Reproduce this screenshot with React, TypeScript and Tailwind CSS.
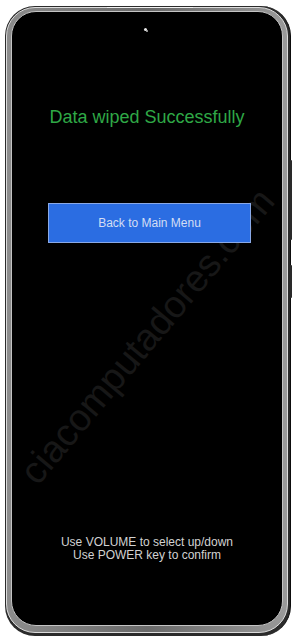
import React from "react";

export default function App() {
  const font = { fontFamily: '"Liberation Sans", Arial, sans-serif' };
  return (
    <div
      className="relative w-[297px] h-[642px] bg-white overflow-hidden pt-[6px] pl-[5px]"
      style={font}
    >
      {/* side buttons */}
      <div className="absolute left-[290px] top-[160px] w-[2px] h-[80px] bg-[#2a2a2a] rounded-r-[1px]" />
      <div className="absolute left-[290px] top-[265px] w-[2px] h-[33px] bg-[#2a2a2a] rounded-r-[1px]" />

      {/* phone body */}
      <div className="w-[286px] h-[630px] rounded-[30px] bg-[#2b2b2b] pt-[1px] pl-[1px] pr-[2px] pb-[3px] border-r border-[#0d0d0d]">
        <div className="relative h-full rounded-[29px] border border-[#dcdcdc] bg-gradient-to-r from-[#8c8c8c] via-[#6a6a6a] to-[#9a9a9a] pt-[3px] pl-[4px] pr-[4px] pb-[6px]">
          {/* top highlight */}
          <div className="absolute left-[100px] -top-[1px] w-[86px] h-[1px] bg-[#f2f2f2]" />
          {/* screen */}
          <div className="relative h-full rounded-[25px] border-[1.5px] border-[#c4c4c4] bg-black overflow-hidden flex flex-col">
            {/* camera */}
            <div className="absolute left-[132px] top-[16px] w-[3px] h-[3px] rounded-full bg-[#e8e8e8]" />
            <div className="absolute left-[134px] top-[18px] w-[2px] h-[2px] rounded-full bg-[#bdbdbd]" />

            {/* watermark */}
            <div className="absolute left-[135px] top-[324px] -translate-x-1/2 -translate-y-1/2 -rotate-[50deg] whitespace-nowrap text-[38px] leading-none text-[#171717]">
              ciacomputadores.com
            </div>

            <div className="relative mt-[96px] text-center text-[18px] leading-[18px] text-[#2fa846]">
              Data wiped Successfully
            </div>

            <div className="relative mt-[77px] ml-[36px] w-[203px] h-[40px] bg-[#2b6de2] border border-[#8aa9e6] flex items-center justify-center text-[12px] text-[#d3def4]">
              Back to Main Menu
            </div>

            <div className="relative mt-[293px] text-center text-[12px] leading-[12.5px] text-[#d2d2d2]">
              <div>Use VOLUME to select up/down</div>
              <div>Use POWER key to confirm</div>
            </div>
          </div>
        </div>
      </div>
    </div>
  );
}
